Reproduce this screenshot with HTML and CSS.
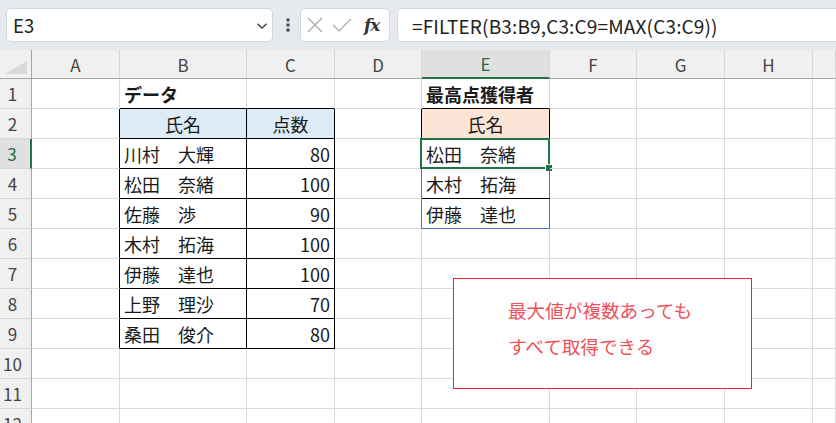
FILE: index.html
```html
<!DOCTYPE html>
<html lang="ja">
<head>
<meta charset="utf-8">
<title>FILTER</title>
<link rel="stylesheet" href="styles.css">
</head>
<body>
<div class="topbar">
  <div class="namebox">
    <span class="nb-text">E3</span>
    <svg class="chev" width="12" height="8" viewBox="0 0 12 8"><path d="M1.5 1.8 L6 6.2 L10.5 1.8" fill="none" stroke="#333" stroke-width="1.3"/></svg>
  </div>
  <div class="dots">
    <svg width="4" height="14" viewBox="0 0 4 14"><rect x="0.5" y="0.5" width="3" height="3" fill="#444"/><rect x="0.5" y="5.5" width="3" height="3" fill="#444"/><rect x="0.5" y="10.5" width="3" height="3" fill="#444"/></svg>
  </div>
  <div class="fxbox">
    <svg width="16" height="16" viewBox="0 0 16 16"><path d="M1 1 L15 15 M15 1 L1 15" stroke="#a8a8a8" stroke-width="1.2" fill="none"/></svg>
    <svg width="20" height="16" viewBox="0 0 20 16"><path d="M1 8 L7 14 L19 2" stroke="#a8a8a8" stroke-width="1.2" fill="none"/></svg>
    <span class="fx">fx</span>
  </div>
  <div class="formula">=FILTER(B3:B9,C3:C9=MAX(C3:C9))</div>
</div>

<div class="sheet">
  <div class="corner"><svg width="22" height="13" viewBox="0 0 22 13"><polygon points="22,0 22,13 0,13" fill="#d9d9d9"/></svg></div>
  <div class="ch">A</div>
  <div class="ch">B</div>
  <div class="ch">C</div>
  <div class="ch">D</div>
  <div class="ch ch-sel">E</div>
  <div class="ch">F</div>
  <div class="ch">G</div>
  <div class="ch">H</div>
  <div class="ch"></div>

  <div class="rh">1</div>
  <div class="c"></div>
  <div class="c bk-b bold">データ</div>
  <div class="c bk-b"></div>
  <div class="c"></div>
  <div class="c bk-b bold">最高点獲得者</div>
  <div class="c"></div><div class="c"></div><div class="c"></div><div class="c"></div>

  <div class="rh">2</div>
  <div class="c bk-r"></div>
  <div class="c bk-r bk-b blue center">氏名</div>
  <div class="c bk-r bk-b blue center">点数</div>
  <div class="c bk-r"></div>
  <div class="c bk-r bk-b peach center">氏名</div>
  <div class="c"></div><div class="c"></div><div class="c"></div><div class="c"></div>

  <div class="rh rh-sel">3</div>
  <div class="c bk-r"></div>
  <div class="c bk-r bk-b">川村　大輝</div>
  <div class="c bk-r bk-b num">80</div>
  <div class="c bl-r"></div>
  <div class="c bl-r bk-b sel">松田　奈緒<span class="selbox"></span><span class="handle"></span></div>
  <div class="c"></div><div class="c"></div><div class="c"></div><div class="c"></div>

  <div class="rh">4</div>
  <div class="c bk-r"></div>
  <div class="c bk-r bk-b">松田　奈緒</div>
  <div class="c bk-r bk-b num">100</div>
  <div class="c bl-r"></div>
  <div class="c bl-r bk-b">木村　拓海</div>
  <div class="c"></div><div class="c"></div><div class="c"></div><div class="c"></div>

  <div class="rh">5</div>
  <div class="c bk-r"></div>
  <div class="c bk-r bk-b">佐藤　渉</div>
  <div class="c bk-r bk-b num">90</div>
  <div class="c bl-r"></div>
  <div class="c bl-r bl-b">伊藤　達也</div>
  <div class="c"></div><div class="c"></div><div class="c"></div><div class="c"></div>

  <div class="rh">6</div>
  <div class="c bk-r"></div>
  <div class="c bk-r bk-b">木村　拓海</div>
  <div class="c bk-r bk-b num">100</div>
  <div class="c"></div><div class="c"></div>
  <div class="c"></div><div class="c"></div><div class="c"></div><div class="c"></div>

  <div class="rh">7</div>
  <div class="c bk-r"></div>
  <div class="c bk-r bk-b">伊藤　達也</div>
  <div class="c bk-r bk-b num">100</div>
  <div class="c"></div><div class="c"></div>
  <div class="c"></div><div class="c"></div><div class="c"></div><div class="c"></div>

  <div class="rh">8</div>
  <div class="c bk-r"></div>
  <div class="c bk-r bk-b">上野　理沙</div>
  <div class="c bk-r bk-b num">70</div>
  <div class="c"></div><div class="c"></div>
  <div class="c"></div><div class="c"></div><div class="c"></div><div class="c"></div>

  <div class="rh">9</div>
  <div class="c bk-r"></div>
  <div class="c bk-r bk-b">桑田　俊介</div>
  <div class="c bk-r bk-b num">80</div>
  <div class="c"></div><div class="c"></div>
  <div class="c"></div><div class="c"></div><div class="c"></div><div class="c"></div>

  <div class="rh">10</div>
  <div class="c"></div><div class="c"></div><div class="c"></div><div class="c"></div><div class="c"></div>
  <div class="c"></div><div class="c"></div><div class="c"></div><div class="c"></div>

  <div class="rh">11</div>
  <div class="c"></div><div class="c"></div><div class="c"></div><div class="c"></div><div class="c"></div>
  <div class="c"></div><div class="c"></div><div class="c"></div><div class="c"></div>

  <div class="rh">12</div>
  <div class="c"></div><div class="c"></div><div class="c"></div><div class="c"></div><div class="c"></div>
  <div class="c"></div><div class="c"></div><div class="c"></div><div class="c"></div>

  <div class="note">
    <p>最大値が複数あっても</p>
    <p>すべて取得できる</p>
  </div>
</div>
</body>
</html>
```

FILE: styles.css
```css
* { box-sizing: border-box; margin: 0; padding: 0; }
html, body { background: #fff; }
body {
  width: 836px;
  height: 423px;
  overflow: hidden;
  font-family: "Noto Sans CJK JP", "Noto Sans", sans-serif;
  color: #1a1a1a;
}

/* ---------- formula bar ---------- */
.topbar {
  height: 50px;
  background: #e6e9ee;
  display: flex;
  align-items: center;
  padding-left: 6px;
  overflow: hidden;
}
.namebox {
  flex: none;
  width: 267px;
  height: 34px;
  background: #fff;
  border: 1px solid #d4d7dc;
  border-radius: 5px;
  display: flex;
  align-items: center;
  justify-content: space-between;
  padding: 0 4px 0 6px;
}
.nb-text { font-size: 18.5px; color: #222; }
.chev { margin-top: 1px; }
.dots {
  flex: none;
  width: 27px;
  display: flex;
  justify-content: center;
  padding-left: 2px;
}
.fxbox {
  flex: none;
  width: 90px;
  height: 34px;
  background: #fff;
  border: 1px solid #d4d7dc;
  border-radius: 5px;
  display: flex;
  align-items: center;
  padding-left: 6px;
  gap: 9px;
}
.fx {
  font-family: "DejaVu Serif", "Liberation Serif", serif;
  font-style: italic;
  font-weight: bold;
  font-size: 17px;
  color: #333;
  margin-left: 3px;
  letter-spacing: -1px;
}
.formula {
  flex: none;
  width: 460px;
  height: 34px;
  margin-left: 7px;
  background: #fff;
  border: 1px solid #d4d7dc;
  border-radius: 5px;
  display: flex;
  align-items: center;
  padding-left: 14px;
  font-size: 19px;
  letter-spacing: 0.15px;
  color: #222;
}

/* ---------- sheet ---------- */
.sheet {
  position: relative;
  display: grid;
  grid-template-columns: 32px 88px 127px 88px 87px 128px 87px 88px 88px 1fr;
  grid-template-rows: 29px repeat(12, 30px);
  font-size: 18px;
}
.corner {
  background: #f0f0f0;
  border-right: 1px solid #a6a6a6;
  border-bottom: 1px solid #a6a6a6;
  display: flex;
  align-items: flex-end;
  justify-content: flex-end;
  padding: 0 4px 4px 0;
}
.ch {
  background: #f0f0f0;
  border-right: 1px solid #d6d6d6;
  border-bottom: 1px solid #a6a6a6;
  display: flex;
  align-items: center;
  justify-content: center;
  font-size: 17px;
  color: #444;
}
.ch-sel {
  background: #e0e0e0;
  color: #1e6b41;
  border-bottom: 2px solid #217346;
}
.rh {
  background: #f0f0f0;
  border-right: 1px solid #a6a6a6;
  border-bottom: 1px solid #d6d6d6;
  display: flex;
  align-items: center;
  justify-content: center;
  padding-right: 6px;
  font-size: 17px;
  color: #444;
}
.rh-sel {
  background: #e0e0e0;
  color: #1e6b41;
  border-right: 2px solid #217346;
}
.c {
  position: relative;
  border-right: 1px solid #dadada;
  border-bottom: 1px solid #dadada;
  display: flex;
  align-items: center;
  padding-left: 4px;
  padding-right: 4px;
  white-space: nowrap;
}
.bold { font-weight: bold; }
.center { justify-content: center; }
.num { justify-content: flex-end; }
.bk-r { border-right-color: #000; }
.bk-b { border-bottom-color: #000; }
.bl-r { border-right-color: #4472c4; }
.bl-b { border-bottom-color: #4472c4; }
.blue { background: #ddebf7; }
.peach { background: #fce4d6; }

.selbox {
  position: absolute;
  left: -2px;
  top: -1px;
  right: -1px;
  bottom: -1px;
  border: 2px solid #217346;
  pointer-events: none;
}
.handle {
  position: absolute;
  right: -4px;
  bottom: -4px;
  width: 6px;
  height: 6px;
  background: #217346;
  border: 1px solid #fff;
  box-sizing: content-box;
}

.note {
  position: absolute;
  left: 453px;
  top: 228px;
  width: 299px;
  height: 111px;
  background: #fff;
  border: 1.5px solid #e8222c;
  padding: 13px 0 0 54px;
  color: #f0505a;
  font-size: 18.6px;
  line-height: 36px;
}
```
